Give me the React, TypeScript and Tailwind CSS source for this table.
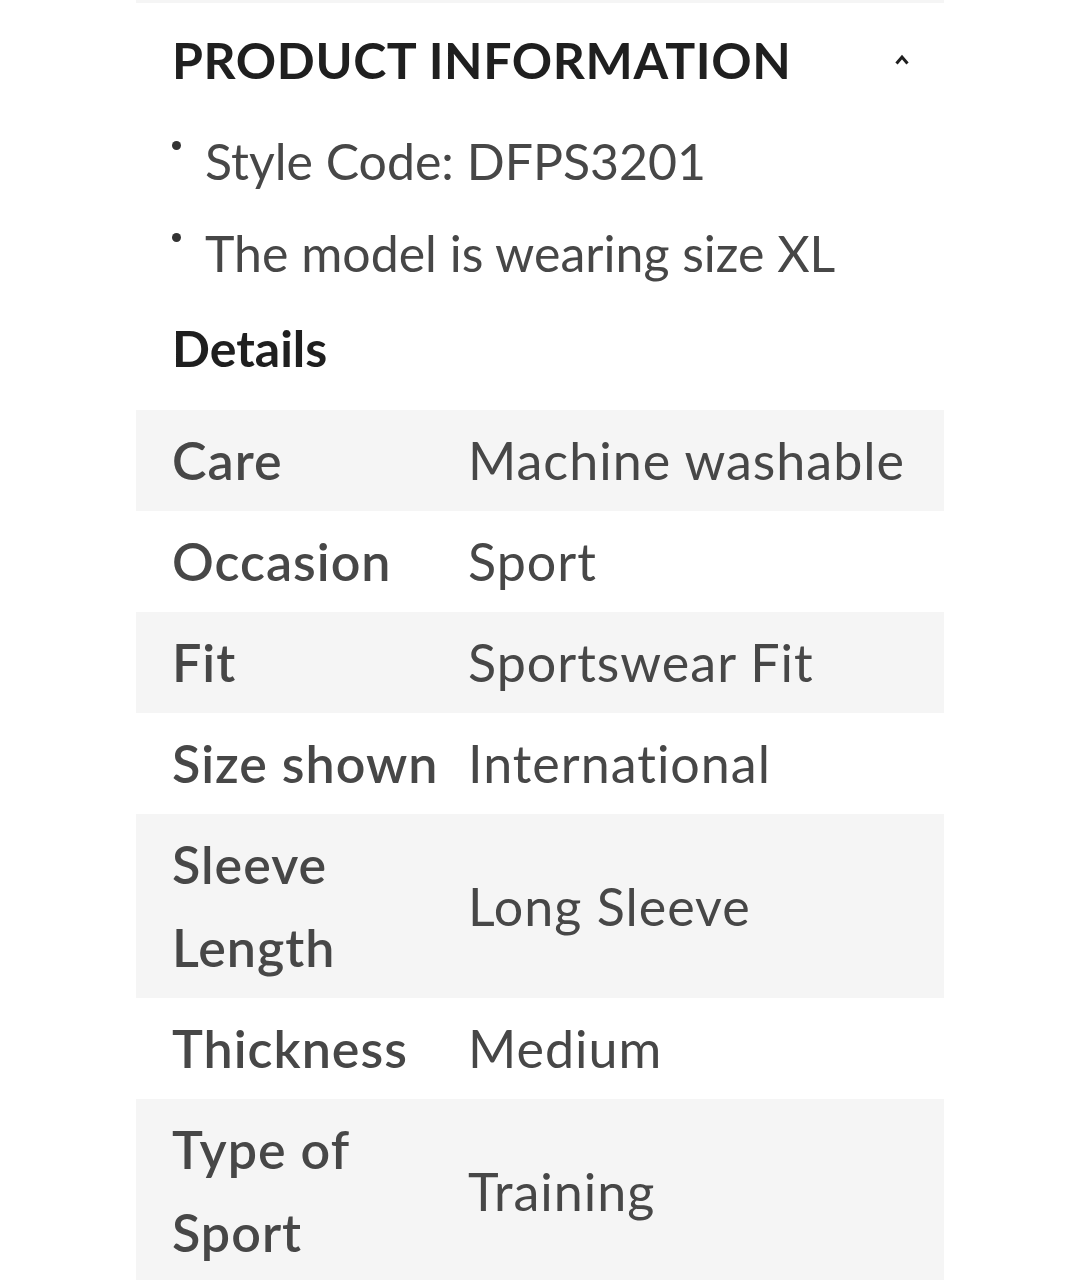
const rows: { label: string; value: string }[] = [
  { label: 'Care', value: 'Machine washable' },
  { label: 'Occasion', value: 'Sport' },
  { label: 'Fit', value: 'Sportswear Fit' },
  { label: 'Size shown', value: 'International' },
  { label: 'Sleeve Length', value: 'Long Sleeve' },
  { label: 'Thickness', value: 'Medium' },
  { label: 'Type of Sport', value: 'Training' },
];

const bullets = ['Style Code: DFPS3201', 'The model is wearing size XL'];

const App = () => {
  return (
    <div className="min-h-screen bg-white font-['Lato',sans-serif]">
      <div className="mx-auto w-[808px]">
        <div className="h-[3px] bg-[#f5f5f5]"></div>

        {/* header */}
        <div className="flex items-center justify-between pl-9 pr-[34px] pt-[22px] pb-[6px]">
          <h2 className="text-[50px] leading-[70px] font-bold tracking-[0.6px] text-[#1f1f1f]">PRODUCT INFORMATION</h2>
          <svg className="h-4 w-4 text-[#1f1f1f]" viewBox="0 0 16 16" fill="none" stroke="currentColor">
            <path d="M2.5 11.5 L8 5 L13.5 11.5" strokeWidth={3} />
          </svg>
        </div>

        {/* bullets */}
        <ul className="mt-[14px] pl-9 text-[#474747]">
          {bullets.map((b) => (
            <li key={b} className="flex items-start">
              <span className="mt-[26px] mr-[24px] h-[9px] w-[9px] shrink-0 rounded-full bg-[#333]"></span>
              <span className="text-[50px] leading-[92px]">{b}</span>
            </li>
          ))}
        </ul>

        <h3 className="pl-9 pt-[3px] text-[50px] leading-[92px] font-bold text-[#1f1f1f]">Details</h3>

        {/* details table */}
        <div className="mt-[16px]">
          {rows.map((r, i) => (
            <div
              key={r.label}
              className={`flex items-center py-[9px] pl-9 text-[52px] leading-[83px] tracking-[1px] text-[#474747] ${i % 2 === 0 ? 'bg-[#f5f5f5]' : 'bg-white'}`}
            >
              <div className="w-[296px] shrink-0 font-semibold">{r.label}</div>
              <div className="font-normal">{r.value}</div>
            </div>
          ))}
        </div>
      </div>
    </div>
  );
};

export default App;
